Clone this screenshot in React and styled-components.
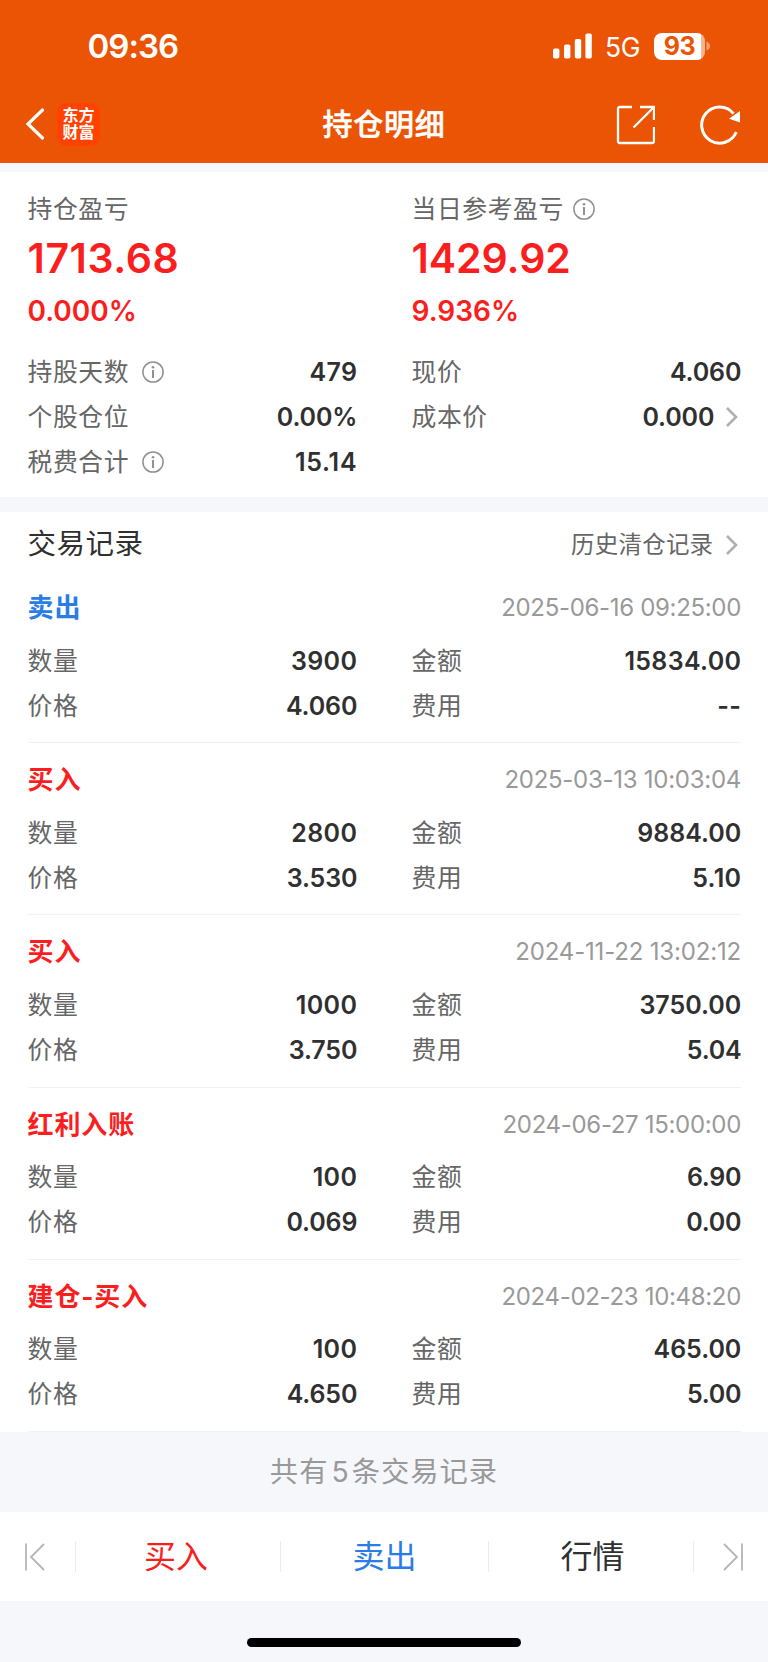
import React from "react";
import styled, { createGlobalStyle } from "styled-components";

const RED = "#fa1e1e";
const BLUE = "#2a7de6";
const INK = "#303030";
const GREY = "#666666";
const PALE = "#f6f7fa";

const GlobalStyle = createGlobalStyle`
  * { box-sizing: border-box; }
  body {
    margin: 0;
    background: ${PALE};
    font-family: Inter, "Noto Sans CJK SC", sans-serif;
    color: ${INK};
  }
`;

const Screen = styled.div`
  width: 768px;
  height: 1662px;
  display: flex;
  flex-direction: column;
  background: ${PALE};
  white-space: nowrap;
  overflow: hidden;
`;

const Header = styled.header`
  height: 163px;
  margin-bottom: 9px;
  background: #ea5404;
  color: #fff;
  flex: none;
`;

const StatusBar = styled.div`
  height: 92px;
  padding: 0 58px 0 87.5px;
  display: flex;
  align-items: center;
  justify-content: space-between;
`;

const Clock = styled.time`
  font-size: 33px;
  font-weight: 600;
  line-height: 40px;
  letter-spacing: -0.95px;
`;

const StatusIcons = styled.div`
  display: flex;
  align-items: center;
`;

const Network = styled.span`
  width: 47px;
  padding-left: 13px;
  font-size: 26.5px;
  line-height: 32px;
  letter-spacing: -0.3px;
  margin: 2px 15px 0 0;
  font-weight: 400;
`;

const Battery = styled.div`
  width: 51px;
  height: 27px;
  border-radius: 8px;
  background: linear-gradient(90deg, #fff 47px, #f6b58f 47px);
  color: #ea5404;
  font-size: 25px;
  line-height: 27px;
  font-weight: 700;
  text-align: center;
  letter-spacing: -0.4px;
`;

const NavBar = styled.div`
  height: 64px;
  display: grid;
  grid-template-columns: 1fr auto 1fr;
  align-items: center;
`;

const NavLeft = styled.div`
  display: flex;
  align-items: center;
  gap: 11px;
  padding-left: 25px;
`;

const NavRight = styled.div`
  display: flex;
  align-items: center;
  justify-content: flex-end;
  gap: 45px;
  padding: 1px 26px 0 0;
`;

const Logo = styled.div`
  width: 43px;
  height: 43px;
  border-radius: 9px;
  background: #ff4200;
  display: flex;
  flex-direction: column;
  justify-content: center;
  text-align: center;
  font-size: 16px;
  line-height: 17.5px;
  font-weight: 700;
`;

const Title = styled.h1`
  margin: 0;
  font-size: 30px;
  line-height: 44px;
  font-weight: 500;
  letter-spacing: 0.7px;
  -webkit-text-stroke: 0.5px #fff;
`;

const Summary = styled.section`
  height: 325px;
  flex: none;
  padding: 19px 27.5px 0;
  background: #fff;
  margin-bottom: 15px;
`;

const Columns = styled.div`
  display: grid;
  grid-template-columns: 329px 329px;
  column-gap: 55px;
`;

const Profit = styled.div`
  margin-bottom: 16px;
`;

const Label = styled.span`
  display: flex;
  align-items: center;
  gap: ${(p) => p.$gap || 13}px;
  height: 36px;
  font-size: 24.8px;
  line-height: 36px;
  letter-spacing: 0.6px;
  color: ${GREY};
`;

const Amount = styled.div`
  font-size: 41px;
  line-height: 62px;
  font-weight: 600;
  letter-spacing: ${(p) => p.$track}px;
  color: ${RED};
`;

const Percent = styled.div`
  font-size: 28px;
  line-height: 44px;
  font-weight: 600;
  color: ${RED};
`;

const Field = styled.div`
  height: 45px;
  display: flex;
  align-items: center;
  justify-content: space-between;
`;

const Value = styled.span`
  display: flex;
  align-items: center;
  gap: 11px;
  margin-right: -0.8px;
  font-size: 25px;
  line-height: 36px;
  font-weight: 600;
  letter-spacing: ${(p) => p.$track}px;
`;

const Records = styled.section`
  height: 920px;
  flex: none;
  padding: 5px 27.5px 0;
  background: #fff;
`;

const RecordsHead = styled.div`
  height: 54px;
  display: flex;
  align-items: center;
  justify-content: space-between;
`;

const SectionTitle = styled.h2`
  margin: 0;
  font-size: 28.5px;
  line-height: 42px;
  font-weight: 400;
  letter-spacing: 0.5px;
`;

const HistoryLink = styled.a`
  display: flex;
  align-items: center;
  gap: 12px;
  margin-right: -0.8px;
  padding-top: 1px;
  font-size: 23.5px;
  line-height: 34px;
  letter-spacing: 0.2px;
  color: ${GREY};
`;

const Record = styled.article`
  height: 172.2px;
  padding-top: 11px;
  border-bottom: 1px solid #f2f2f4;
`;

const RecordHead = styled.div`
  height: 52px;
  margin-bottom: 4px;
  display: flex;
  align-items: center;
  justify-content: space-between;
`;

const Kind = styled.strong`
  font-size: 26px;
  line-height: 38px;
  font-weight: 700;
  letter-spacing: 0.9px;
  color: ${(p) => (p.$sell ? BLUE : RED)};
`;

const Stamp = styled.time`
  margin-right: -0.5px;
  font-size: 24px;
  line-height: 34px;
  letter-spacing: ${(p) => p.$track}px;
  color: #999;
`;

const Total = styled.div`
  height: 80px;
  flex: none;
  text-align: center;
  font-size: 28.3px;
  line-height: 80px;
  letter-spacing: 1px;
  color: #999;
`;

const Count = styled.span`
  padding: 0 2px 0 3px;
`;

const ActionBar = styled.nav`
  height: 89px;
  flex: none;
  display: grid;
  grid-template-columns: 75px 205px 208px 205px 75px;
  align-items: center;
  background: #fff;
`;

const Action = styled.button`
  height: 31px;
  padding: 0 ${(p) => p.$right || 0}px 0 ${(p) => p.$left || 0}px;
  display: flex;
  align-items: center;
  justify-content: center;
  border: 0;
  border-left: ${(p) => (p.$divided ? "1px solid #ebebed" : "0")};
  background: none;
  font: 400 32px/31px Inter, "Noto Sans CJK SC", sans-serif;
  color: ${(p) => p.$color || INK};
`;

const HomeArea = styled.div`
  flex: 1;
  display: flex;
  justify-content: center;
  padding-top: 37px;
`;

const HomeIndicator = styled.div`
  width: 274px;
  height: 9px;
  border-radius: 5px;
  background: #000;
`;

const Signal = () => (
  <svg width="39" height="26" viewBox="0 0 39 26" fill="#fff">
    <rect x="0" y="15.5" width="6.4" height="10" rx="1.8" />
    <rect x="11" y="11.5" width="6.4" height="14" rx="1.8" />
    <rect x="21.8" y="6" width="6.4" height="19.5" rx="1.8" />
    <rect x="32.4" y="0.5" width="6.4" height="25" rx="1.8" />
  </svg>
);

const BatteryTip = () => (
  <svg width="5" height="12" viewBox="0 0 5 12">
    <path d="M1.5 1.5Q5 3 5 6T1.5 10.5Z" fill="#f3a274" />
  </svg>
);

const BackIcon = () => (
  <svg width="21" height="34" viewBox="0 0 21 34" fill="none" stroke="#fff" strokeWidth="3.2" strokeLinecap="round">
    <path d="M17.5 3 3 17 17.5 31" />
  </svg>
);

const ShareIcon = () => (
  <svg width="40" height="40" viewBox="0 0 40 40" fill="none" stroke="#fff" strokeWidth="2.3">
    <path d="M17 2H5Q3 2 3 4V36Q3 38 5 38H37Q39 38 39 36V22" />
    <path d="M25 2H39V15M39 2 18.5 22.5" />
  </svg>
);

const RefreshIcon = () => (
  <svg width="42" height="42" viewBox="0 0 42 42" fill="none">
    <path d="M36.3 28A18 18 0 1 1 33.5 9.6" stroke="#fff" strokeWidth="3" />
    <path d="M40 7V18.5L29 14.8Z" fill="#fff" />
  </svg>
);

const InfoIcon = () => (
  <svg width="22" height="22" viewBox="0 0 22 22" fill="none" stroke="#909090" strokeWidth="1.5">
    <circle cx="11" cy="11" r="10.1" />
    <circle cx="11" cy="6.2" r="1.3" fill="#909090" stroke="none" />
    <path d="M11 9V17" strokeWidth="2" />
  </svg>
);

const Chevron = () => (
  <svg width="16" height="22" viewBox="0 0 16 22" fill="none" stroke="#b0b0b0" strokeWidth="2.6">
    <path d="M2 2 11 11 2 20" />
  </svg>
);

const FirstIcon = () => (
  <svg width="20" height="28" viewBox="0 0 20 28" fill="none" stroke="#b5b5b5" strokeWidth="1.8">
    <path d="M1 .5V27.5M19 1 6 14 19 27" />
  </svg>
);

const LastIcon = () => (
  <svg width="20" height="28" viewBox="0 0 20 28" fill="none" stroke="#b5b5b5" strokeWidth="1.8">
    <path d="M19 .5V27.5M1 1 14 14 1 27" />
  </svg>
);

const records = [
  { kind: "卖出", sell: true, time: "2025-06-16 09:25:00", qty: "3900", price: "4.060", sum: "15834.00", fee: "--" },
  { kind: "买入", time: "2025-03-13 10:03:04", qty: "2800", price: "3.530", sum: "9884.00", fee: "5.10" },
  { kind: "买入", time: "2024-11-22 13:02:12", qty: "1000", price: "3.750", sum: "3750.00", fee: "5.04" },
  { kind: "红利入账", time: "2024-06-27 15:00:00", qty: "100", price: "0.069", sum: "6.90", fee: "0.00" },
  { kind: "建仓-买入", time: "2024-02-23 10:48:20", qty: "100", price: "4.650", sum: "465.00", fee: "5.00" },
];

const countOnes = (text) => text.split("1").length - 1;

// Decimals are set a little tighter; the narrow digit 1 gets extra room.
const valueTrack = (text) =>
  text.includes(".") ? 0.35 + (countOnes(text) * 2.2 - 2.4) / text.length : 0.35;

const stampTrack = (text) => -0.37 + countOnes(text) * 0.05;

function DataField({ label, info, link, children }) {
  return (
    <Field>
      <Label>
        {label}
        {info && <InfoIcon />}
      </Label>
      <Value $track={valueTrack(children)}>
        {children}
        {link && <Chevron />}
      </Value>
    </Field>
  );
}

export default function App() {
  return (
    <Screen>
      <GlobalStyle />
      <Header>
        <StatusBar>
          <Clock>09:36</Clock>
          <StatusIcons>
            <Signal />
            <Network>5G</Network>
            <Battery>93</Battery>
            <BatteryTip />
          </StatusIcons>
        </StatusBar>
        <NavBar>
          <NavLeft>
            <BackIcon />
            <Logo>
              <span>东方</span>
              <span>财富</span>
            </Logo>
          </NavLeft>
          <Title>持仓明细</Title>
          <NavRight>
            <ShareIcon />
            <RefreshIcon />
          </NavRight>
        </NavBar>
      </Header>

      <Summary>
        <Columns>
          <Profit>
            <Label>持仓盈亏</Label>
            <Amount $track={0.55}>1713.68</Amount>
            <Percent>0.000%</Percent>
          </Profit>
          <Profit>
            <Label $gap={9}>
              当日参考盈亏
              <InfoIcon />
            </Label>
            <Amount $track={-0.05}>1429.92</Amount>
            <Percent>9.936%</Percent>
          </Profit>
        </Columns>
        <Columns>
          <DataField label="持股天数" info>479</DataField>
          <DataField label="现价">4.060</DataField>
          <DataField label="个股仓位">0.00%</DataField>
          <DataField label="成本价" link>0.000</DataField>
          <DataField label="税费合计" info>15.14</DataField>
        </Columns>
      </Summary>

      <Records>
        <RecordsHead>
          <SectionTitle>交易记录</SectionTitle>
          <HistoryLink>
            历史清仓记录
            <Chevron />
          </HistoryLink>
        </RecordsHead>
        {records.map((r) => (
          <Record key={r.time}>
            <RecordHead>
              <Kind $sell={r.sell}>{r.kind}</Kind>
              <Stamp $track={stampTrack(r.time)}>{r.time}</Stamp>
            </RecordHead>
            <Columns>
              <DataField label="数量">{r.qty}</DataField>
              <DataField label="金额">{r.sum}</DataField>
              <DataField label="价格">{r.price}</DataField>
              <DataField label="费用">{r.fee}</DataField>
            </Columns>
          </Record>
        ))}
      </Records>

      <Total>
        共有<Count>5</Count>条交易记录
      </Total>

      <ActionBar>
        <Action $right={5}>
          <FirstIcon />
        </Action>
        <Action $divided $color={RED} $right={4}>买入</Action>
        <Action $divided $color={BLUE}>卖出</Action>
        <Action $divided $left={3}>行情</Action>
        <Action $divided $left={3}>
          <LastIcon />
        </Action>
      </ActionBar>

      <HomeArea>
        <HomeIndicator />
      </HomeArea>
    </Screen>
  );
}
